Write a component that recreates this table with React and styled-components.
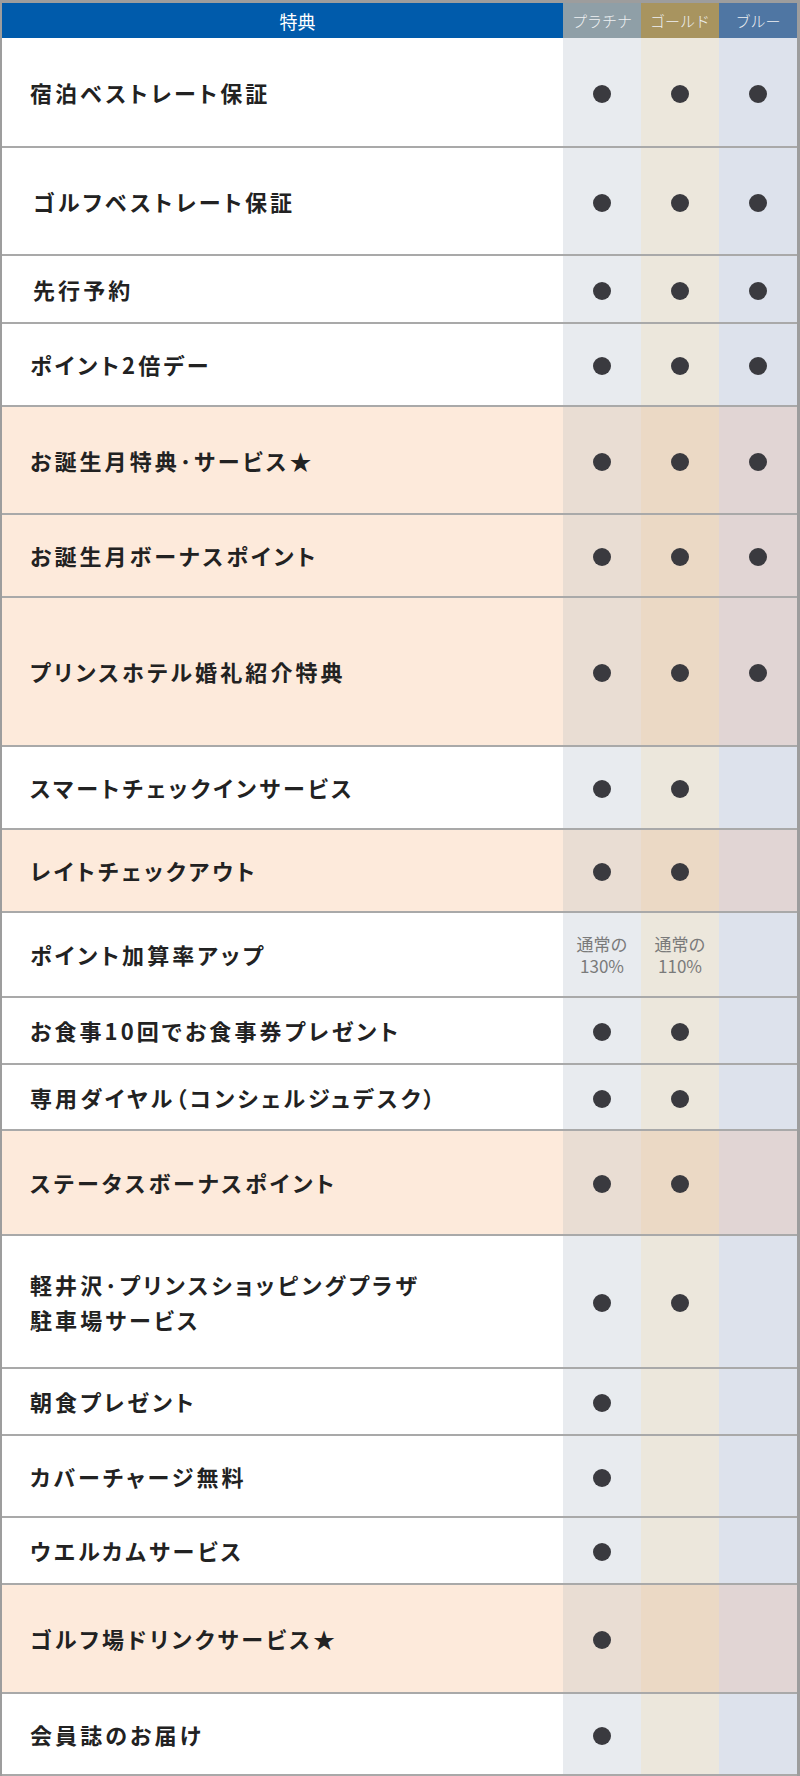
import React from 'react';
import styled, { createGlobalStyle } from 'styled-components';

const GlobalStyle = createGlobalStyle`
  body {
    margin: 0;
    background: #fff;
    font-family: "Noto Sans CJK JP", "Noto Sans", sans-serif;
  }
`;

const COLS = '561px 78px 78px 78px';

const headColors = {
  platinum: '#8f9fa7',
  gold: '#a8945f',
  blue: '#4f76a3',
};

const bodyColors = {
  plain: { platinum: '#e8ebef', gold: '#ece7dc', blue: '#dde2ec' },
  peach: { platinum: '#e9ddd3', gold: '#ebd9c5', blue: '#e1d5d4' },
};

const Table = styled.div`
  width: 800px;
  box-sizing: border-box;
  border-top: 3px solid #9d9d9d;
  border-left: 2px solid #9d9d9d;
  border-right: 3px solid #9d9d9d;
`;

const HeadRow = styled.div`
  display: grid;
  grid-template-columns: ${COLS};
  height: 35px;
`;

const HeadMain = styled.div`
  background: #005bab;
  color: #fff;
  font-size: 18px;
  display: flex;
  align-items: center;
  justify-content: center;
  padding-left: 30px;
`;

const HeadTier = styled.div`
  background: ${(p) => headColors[p.tier]};
  color: #eef0f2;
  font-size: 15px;
  font-weight: 300;
  display: flex;
  align-items: center;
  justify-content: center;
`;

const Row = styled.div`
  display: grid;
  grid-template-columns: ${COLS};
  height: ${(p) => p.h}px;
  box-sizing: border-box;
  border-bottom: 2px solid #a9a9a9;
  background: ${(p) => (p.tone === 'peach' ? '#fdeadb' : '#fff')};
`;

const Label = styled.div`
  display: flex;
  align-items: center;
  padding-left: ${(p) => 28 + (p.indent || 0)}px;
  font-size: 22px;
  font-weight: 700;
  letter-spacing: 3.1px;
  font-feature-settings: "palt";
  line-height: 35px;
  color: #222;
`;

const TierCell = styled.div`
  background: ${(p) => bodyColors[p.tone][p.tier]};
  display: flex;
  align-items: center;
  justify-content: center;
`;

const Dot = styled.span`
  width: 18px;
  height: 18px;
  margin-top: 3px;
  border-radius: 50%;
  background: #3a3a3f;
`;

const Rate = styled.div`
  font-family: "Noto Sans CJK JP", sans-serif;
  font-size: 17px;
  font-weight: 400;
  line-height: 22px;
  color: #7a7a7a;
  text-align: center;
`;

const tiers = ['platinum', 'gold', 'blue'];

const rows = [
  { label: '宿泊ベストレート保証', h: 110, marks: [1, 1, 1] },
  { label: 'ゴルフベストレート保証', h: 108, marks: [1, 1, 1], indent: 3 },
  { label: '先行予約', h: 68, marks: [1, 1, 1], indent: 3 },
  { label: 'ポイント2倍デー', h: 83, marks: [1, 1, 1] },
  { label: 'お誕生月特典･サービス★', h: 108, marks: [1, 1, 1], tone: 'peach' },
  { label: 'お誕生月ボーナスポイント', h: 83, marks: [1, 1, 1], tone: 'peach' },
  { label: 'プリンスホテル婚礼紹介特典', h: 149, marks: [1, 1, 1], tone: 'peach' },
  { label: 'スマートチェックインサービス', h: 83, marks: [1, 1, 0] },
  { label: 'レイトチェックアウト', h: 83, marks: [1, 1, 0], tone: 'peach' },
  { label: 'ポイント加算率アップ', h: 85, marks: ['130%', '110%', 0] },
  { label: 'お食事10回でお食事券プレゼント', h: 67, marks: [1, 1, 0] },
  { label: '専用ダイヤル（コンシェルジュデスク）', h: 66, marks: [1, 1, 0] },
  { label: 'ステータスボーナスポイント', h: 105, marks: [1, 1, 0], tone: 'peach' },
  { label: ['軽井沢･プリンスショッピングプラザ', '駐車場サービス'], h: 133, marks: [1, 1, 0] },
  { label: '朝食プレゼント', h: 67, marks: [1, 0, 0] },
  { label: 'カバーチャージ無料', h: 82, marks: [1, 0, 0] },
  { label: 'ウエルカムサービス', h: 67, marks: [1, 0, 0] },
  { label: 'ゴルフ場ドリンクサービス★', h: 109, marks: [1, 0, 0], tone: 'peach' },
  { label: '会員誌のお届け', h: 82, marks: [1, 0, 0] },
];

function Mark({ value }) {
  if (!value) return null;
  if (typeof value === 'string') {
    return (
      <Rate>
        通常の
        <br />
        {value}
      </Rate>
    );
  }
  return <Dot />;
}

export default function App() {
  return (
    <>
      <GlobalStyle />
      <Table>
        <HeadRow>
          <HeadMain>特典</HeadMain>
          <HeadTier tier="platinum">プラチナ</HeadTier>
          <HeadTier tier="gold">ゴールド</HeadTier>
          <HeadTier tier="blue">ブルー</HeadTier>
        </HeadRow>
        {rows.map((r, i) => {
          const tone = r.tone || 'plain';
          return (
            <Row key={i} h={r.h} tone={tone}>
              <Label indent={r.indent}>
                {Array.isArray(r.label) ? (
                  <div>
                    {r.label[0]}
                    <br />
                    {r.label[1]}
                  </div>
                ) : (
                  r.label
                )}
              </Label>
              {tiers.map((t, j) => (
                <TierCell key={t} tier={t} tone={tone}>
                  <Mark value={r.marks[j]} />
                </TierCell>
              ))}
            </Row>
          );
        })}
      </Table>
    </>
  );
}
